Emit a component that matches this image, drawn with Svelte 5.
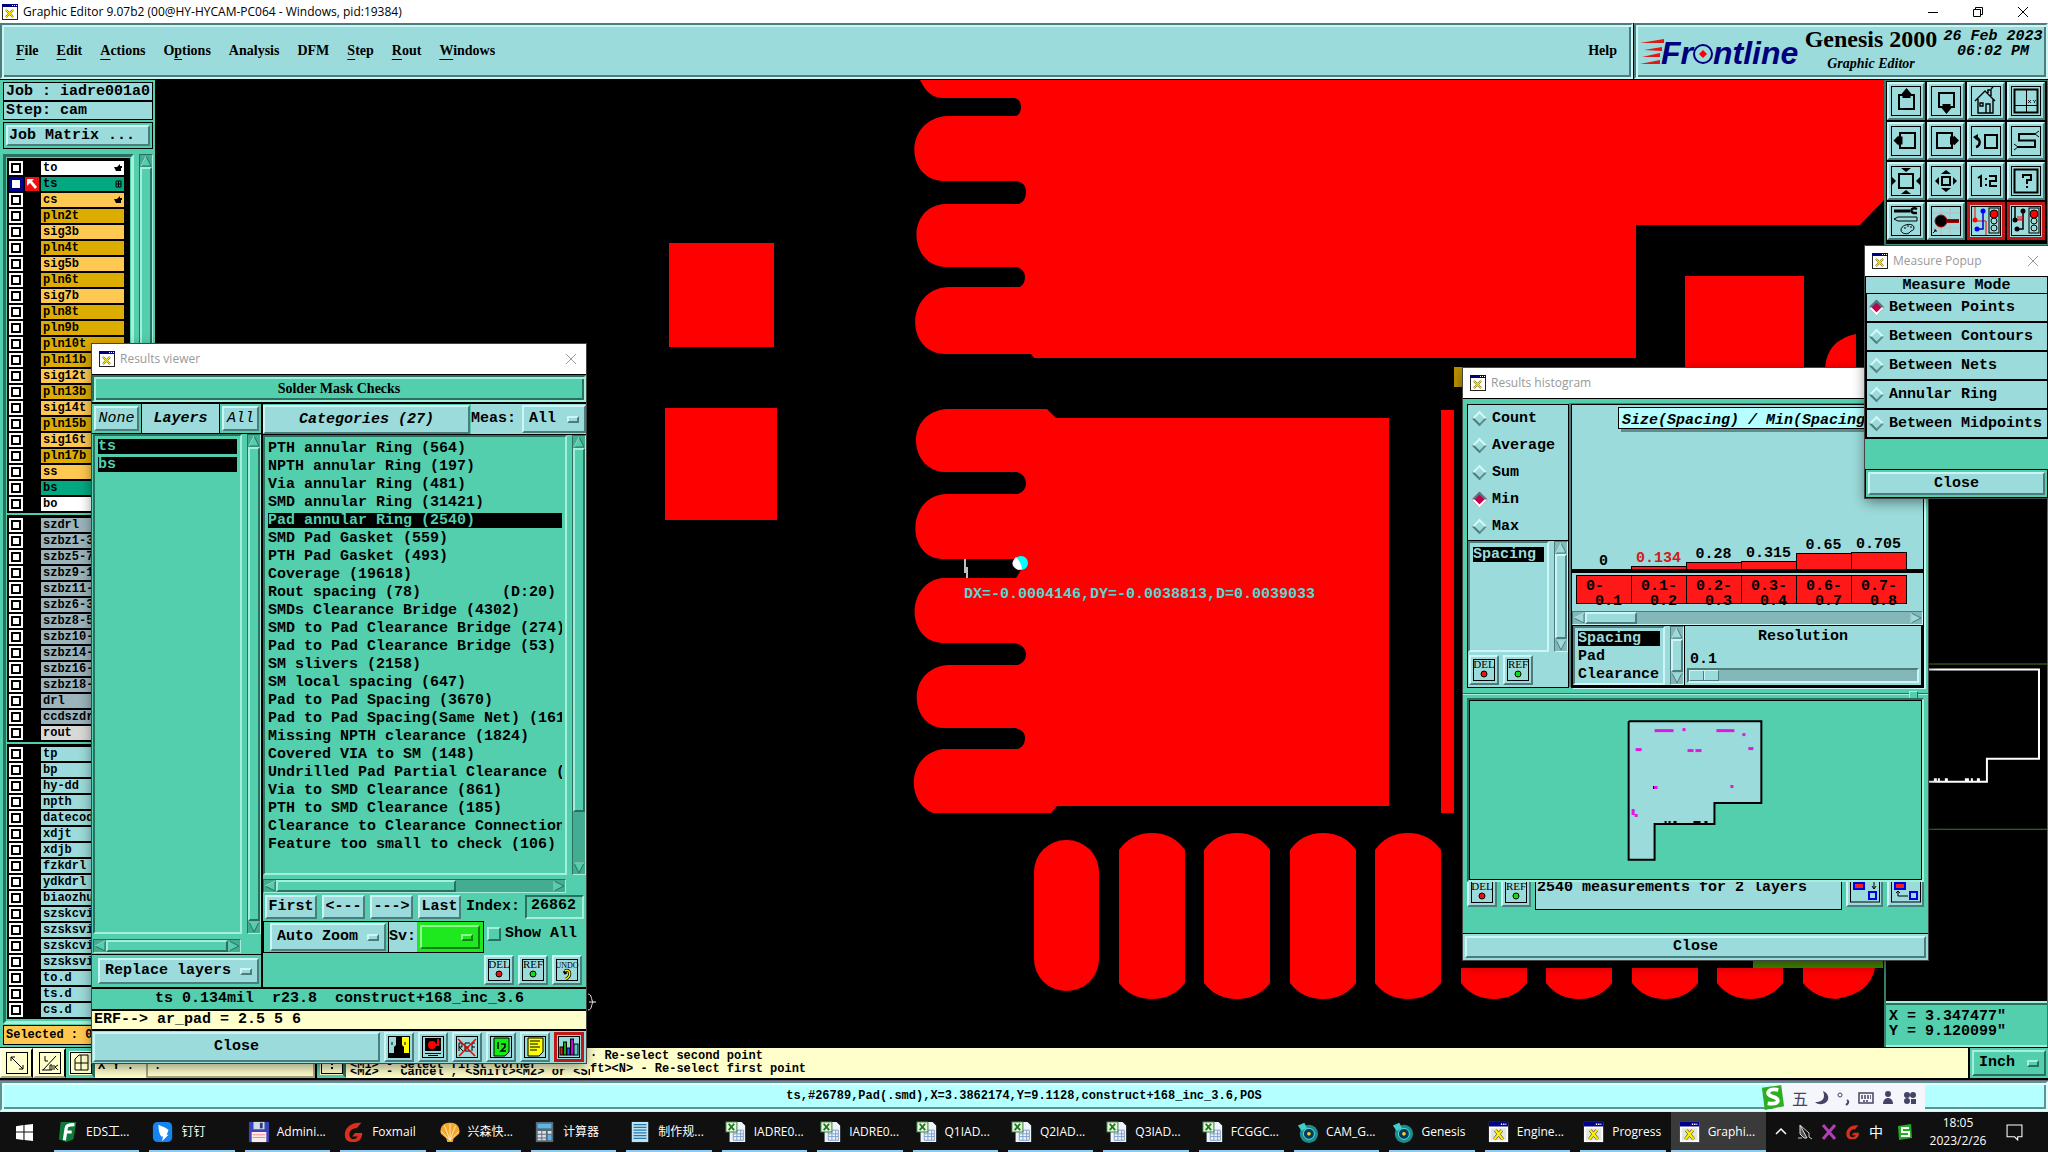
<script>
  const menus = [
    ['', 'F', 'ile'], ['', 'E', 'dit'], ['', 'A', 'ctions'], ['O', 'p', 'tions'], ['Analysis', '', ''],
    ['DFM', '', ''], ['', 'S', 'tep'], ['', 'R', 'out'], ['', 'W', 'indows']
  ];

  const mk = (kind, names) => names.map((n) => ({ n, kind }));
  const inner = 'pln2t sig3b pln4t sig5b pln6t sig7b pln8t pln9b pln10t pln11b sig12t pln13b sig14t pln15b sig16t pln17b'.split(' ');
  const groups = [
    [
      { n: 'to', kind: 'white', hand: true },
      { n: 'ts', kind: 'mask', on: true },
      { n: 'cs', kind: 'signal', hand: true },
      ...inner.map((n) => ({ n, kind: n.startsWith('p') ? 'plane' : 'signal' })),
      { n: 'ss', kind: 'signal' },
      { n: 'bs', kind: 'mask' },
      { n: 'bo', kind: 'white' }
    ],
    [
      ...mk('drill', 'szdrl szbz1-3 szbz5-7 szbz9-1 szbz11- szbz6-3 szbz8-5 szbz10- szbz14- szbz16- szbz18- drl ccdszdr'.split(' ')),
      { n: 'rout', kind: 'rout' }
    ],
    mk('misc', 'tp bp hy-dd npth datecod xdjt xdjb fzkdrl ydkdrl biaozhu szskcvi szsksvi szskcvi szsksvi to.d ts.d cs.d'.split(' '))
  ];

  const categories = [
    'PTH annular Ring (564)', 'NPTH annular Ring (197)', 'Via annular Ring (481)', 'SMD annular Ring (31421)',
    'Pad annular Ring (2540)', 'SMD Pad Gasket (559)', 'PTH Pad Gasket (493)', 'Coverage (19618)',
    'Rout spacing (78)         (D:20)', 'SMDs Clearance Bridge (4302)', 'SMD to Pad Clearance Bridge (274)',
    'Pad to Pad Clearance Bridge (53)', 'SM slivers (2158)', 'SM local spacing (647)', 'Pad to Pad Spacing (3670)',
    'Pad to Pad Spacing(Same Net) (161)', 'Missing NPTH clearance (1824)', 'Covered VIA to SM (148)',
    'Undrilled Pad Partial Clearance (12)', 'Via to SMD Clearance (861)', 'PTH to SMD Clearance (185)',
    'Clearance to Clearance Connection', 'Feature too small to check (106)'
  ];

  const bins = [
    { v: '0', h: 0, a: '0-', b: '0.1' },
    { v: '0.134', h: 3, a: '0.1-', b: '0.2', hot: true },
    { v: '0.28', h: 7, a: '0.2-', b: '0.3' },
    { v: '0.315', h: 8, a: '0.3-', b: '0.4' },
    { v: '0.65', h: 16, a: '0.6-', b: '0.7' },
    { v: '0.705', h: 17, a: '0.7-', b: '0.8' }
  ];

  const traffic = '<rect x="18" y="2" width="10" height="25" fill="none" stroke="#000"/><circle cx="23" cy="8" r="4" fill="#f00" stroke="#000"/><circle cx="23" cy="15" r="3" fill="none" stroke="#000"/><circle cx="23" cy="22" r="3" fill="none" stroke="#000"/>';
  const tools = [
    { t: 'Pan up', s: '<rect x="8" y="9" width="15" height="14" fill="none" stroke="#000" stroke-width="2"/><path d="M15.500 2l5 6h-1v4h-8V8h-1z"/>' },
    { t: 'Pan down', s: '<rect x="8" y="7" width="15" height="14" fill="none" stroke="#000" stroke-width="2"/><path d="M15.500 28l5-6h-1v-4h-8v4h-1z"/>' },
    { t: 'Home', s: '<path d="M4 15L14 5l10 10M7 13v14h15V13M17 7V4h3v6M20 3l2-2M9 17h3v3H9zM15 27v-9h4v9" fill="none" stroke="#000" stroke-width="1.400"/>' },
    { t: 'Window XY', s: '<rect x="3.500" y="3.500" width="23" height="23" fill="none" stroke="#000" stroke-width="2"/><path d="M15.500 4v22M4 19.500h22" stroke="#000" fill="none"/><path d="M17 14l3 3m0-3l-3 3M22 14l1.500 1.500L25 14m-1.500 1.500V17" stroke="#000" fill="none" stroke-width=".8"/>' },
    { t: 'Pan left', s: '<rect x="9" y="7" width="15" height="15" fill="none" stroke="#000" stroke-width="2"/><path d="M2.500 14.500l5-5v1h4v8h-4v1z"/>' },
    { t: 'Pan right', s: '<rect x="6" y="7" width="15" height="15" fill="none" stroke="#000" stroke-width="2"/><path d="M28 14.500l-5-5v1h-4v8h4v1z"/>' },
    { t: 'Previous', s: '<rect x="14" y="9" width="12" height="13" fill="none" stroke="#000" stroke-width="2"/><path d="M4 12c6-1 6 8 1 9" fill="none" stroke="#000" stroke-width="2.500"/><path d="M2 11l5-3v7z"/>' },
    { t: 'Serpentine', s: '<path d="M24 8H8v6.500h16V21H7" fill="none" stroke="#000" stroke-width="2"/><path d="M24 8l4-3M24 8l4 3M7 21l-4-3M7 21l-4 3" stroke="#000" fill="none"/>' },
    { t: 'Zoom in', s: '<rect x="8" y="8" width="14" height="14" fill="none" stroke="#000" stroke-width="2"/><path d="M15 6l-5-4h10zM15 24l-5 4h10zM5 15l-4-4v8zM25 15l4-4v8z"/>' },
    { t: 'Zoom out', s: '<rect x="11" y="11" width="8" height="8" fill="none" stroke="#000" stroke-width="2"/><path d="M15 4l-5 4h10zM15 26l-5-4h10zM4 15l4-4v8zM26 15l-4-4v8z"/>' },
    { t: 'Scale one to two', s: '<path d="M7 12l3-2v11M15 12v2m0 4v2M18 10h7v5h-6v5h7" fill="none" stroke="#000" stroke-width="2"/>' },
    { t: 'Query', s: '<rect x="3.500" y="3.500" width="23" height="23" fill="none" stroke="#000" stroke-width="2"/><path d="M12 12V9h8v5h-4v4m0 2v2" fill="none" stroke="#000" stroke-width="2"/>' },
    { t: 'Tools', s: '<path d="M3 5h16" stroke="#000" stroke-width="3"/><path d="M26 3c-6-3-9 5 0 4" fill="none" stroke="#000" stroke-width="2.500"/><path d="M3 13l4-2h19v4H7zM10 24c0-6 13-8 13-2 0 3-3 2-4 4-2 3-9 2-9-2z" fill="none" stroke="#000"/><path d="M13 22h2m1-2h2m1 1h2" stroke="#000"/>' },
    { t: 'Snap', s: '<path d="M10 1v28M19 1v28M1 7h28M1 22h28" stroke="#c9b0b0" stroke-width=".8"/><path d="M10 15h18" stroke="#a00" stroke-width="4"/><path d="M10 15h18" stroke="#300" stroke-width="1"/><circle cx="10" cy="15" r="6" stroke="#a00"/><path d="M2 27l3-3m-2 0h2v2" stroke="#000" fill="none"/>' },
    { t: 'Net compare', red: true, s: '<path d="M4 1v14h11v14" stroke="#f00" fill="none" stroke-width="1"/><path d="M12 5v18H7" stroke="#00c" fill="none" stroke-width="1.500"/><circle cx="12" cy="5" r="2.500" fill="#00f"/><circle cx="6" cy="23" r="2.500" fill="#00f"/><circle cx="4" cy="14" r="2.500" fill="#f00"/>' + traffic },
    { t: 'Net measure', red: true, s: '<path d="M4 1v12M12 5v18H7" stroke="#000" fill="none" stroke-width="1.500"/><path d="M6 14h6M7 10v4m2-4v4m2-4v4" stroke="#f00"/><circle cx="12" cy="5" r="2.500"/><circle cx="6" cy="23" r="2.500"/><circle cx="4" cy="14" r="2.500"/>' + traffic }
  ];

  const viewerTools = [
    { t: 'Contrast', s: '<rect x="0" y="0" width="10" height="20" fill="#9cdbdb"/><rect x="10" y="0" width="10" height="20" fill="#ff0"/><path d="M7 0h6v8l2 2v6h5v4H0v-4h5v-6l2-2z"/><path d="M3 5v3M16 5v3" stroke="#000"/>' },
    { t: 'Record', s: '<rect x="2" y="1" width="16" height="13"/><circle cx="9" cy="8" r="4" fill="#f00"/><path d="M9 8h6V2" stroke="#f00" stroke-width="2" fill="none"/><path d="M2 16.500h16M5 18.500h10" stroke="#000"/>' },
    { t: 'Clear references', s: '<path d="M2 14V6h3v4H2l4 4M13 6H8v8h5M8 10h4M18 6h-3v8M15 10h3" fill="none" stroke="#000"/><path d="M1 2l17 17M19 2L2 19" stroke="#e00" stroke-width="1.500"/>' },
    { t: 'Numbers', s: '<path d="M3 1h15v14l-4 4H3z" fill="#1e1" stroke="#000"/><path d="M7 5v7M10 7h4v3l-4 4h5" stroke="#000" fill="none" stroke-width="1.500"/>' },
    { t: 'Notes', s: '<path d="M3 1h15v14l-4 4H3z" fill="#ff0" stroke="#000"/><path d="M5 4h10M5 7h8M5 10h10M5 13h7" stroke="#000"/>' },
    { t: 'Histogram', red: true, s: '<rect x="1" y="10" width="3" height="8" fill="#d22" stroke="#000"/><rect x="4.500" y="5" width="3" height="13" fill="#1a1" stroke="#000"/><rect x="8" y="11" width="3" height="7" fill="#35f" stroke="#000"/><rect x="11.500" y="2" width="3" height="16" fill="#c0c" stroke="#000"/><rect x="15" y="7" width="4" height="11" fill="#5cc" stroke="#000"/>' }
  ];

  const modes = ['Between Points', 'Between Contours', 'Between Nets', 'Annular Ring', 'Between Midpoints'];
  const stats = ['Count', 'Average', 'Sum', 'Min', 'Max'];

  const eds = '<path d="M4 1h17l-3 19-8 3-8-3z" fill="#0d7a3c"/><path d="M8 21L10 8c0-3 2-4 9-4M9 12h7" stroke="#fff" stroke-width="3.500" fill="none"/>';
  const excel = '<path d="M5 1h13l4 4v18H5z" fill="#eef4fb"/><path d="M9 10h11v11H9zM9 14h11M9 17h11M13 10v11M17 10v11" fill="none" stroke="#7d9cc8"/><rect x="1" y="1" width="12" height="11" fill="#e6f3df" stroke="#2c7a2c"/><path d="M4 3l6 7M10 3l-6 7" stroke="#1c7a1c" stroke-width="2"/>';
  const gen = '<circle cx="13" cy="14" r="10" fill="#1c8d8d"/><circle cx="13" cy="14" r="6" fill="#063a5a" stroke="#5ee"/><circle cx="13" cy="14" r="2" fill="#fc3"/><path d="M1 5l7-3 3 6-6 3z" fill="#4cc"/>';
  const xwin = '<rect x="1" y="1" width="21" height="22" fill="#fff"/><rect x="1" y="1" width="21" height="5" fill="#008"/><path d="M14 3.500h6" stroke="#fff" stroke-width="1.500" stroke-dasharray="1.500 1"/><rect x="3" y="8" width="17" height="13" fill="#e4e4e0"/><path d="M8 10l8 10M15 10L7 20" stroke="#333" stroke-width="3.500"/><path d="M8 10l8 10M15 10L7 20" stroke="#fe0" stroke-width="2.500"/>';
  const tasks = [
    ['EDS工...', eds],
    ['钉钉', '<rect x="1" y="1" width="21" height="22" rx="5" fill="#1583f0"/><path d="M7 4c5 2 10 4 11 6l-2 5h2l-7 7 1-5h-2c-2-3-3-8-3-13z" fill="#fff"/>'],
    ['Admini...', '<rect x="1" y="1" width="22" height="22" fill="#3a44b8"/><rect x="6" y="1" width="12" height="8" fill="#cdd"/><rect x="13" y="2" width="3" height="6" fill="#338"/><rect x="4" y="12" width="16" height="11" fill="#fdeaea"/><path d="M5 15h14M5 18h14" stroke="#e88"/>'],
    ['Foxmail', '<path d="M20 2C8 1 2 8 2 15s5 8 9 8c7 0 10-4 10-10h-8l-3 4h6c-2 4-9 4-9-2 0-5 4-7 8-7z" fill="#d8301c"/>'],
    ['兴森快...', '<path d="M9 23l-1-4L2 14C0 5 7 1 12 2c6-1 12 4 10 12l-6 5-1 4z" fill="#f3a52c"/><path d="M12 21V3M12 21L6 5M12 21l6-16M12 21L2 11m10 10l10-10" stroke="#fff0c0"/>'],
    ['计算器', '<rect x="2" y="1" width="19" height="22" fill="#5b6b74"/><rect x="4" y="3" width="15" height="5" fill="#5ab5e8"/><path d="M4 11h4v3H4zm5 0h4v3H9zm6 0h4v3h-4zM4 15h4v3H4zm5 0h4v3H9zM4 19h4v2H4zm5 0h4v2H9z" fill="#dde"/><path d="M15 15h4v6h-4z" fill="#5ab5e8"/>'],
    ['制作规...', '<rect x="3" y="1" width="18" height="22" fill="#bfe4f5"/><path d="M5 4h14M5 7h14M5 10h14M5 13h14M5 16h14M5 19h14" stroke="#2778a8" stroke-width="1.500"/>'],
    ['IADRE0...', excel], ['IADRE0...', excel], ['Q1IAD...', excel], ['Q2IAD...', excel], ['Q3IAD...', excel], ['FCGGC...', excel],
    ['CAM_G...', gen], ['Genesis', gen], ['Engine...', xwin], ['Progress', xwin], ['Graphi...', xwin]
  ];
  const pads = [1119, 1204, 1290, 1375, 1461, 1546, 1632, 1717];
</script>

{#snippet winIcon()}
  <svg class="win-icon" viewBox="0 0 16 16" aria-hidden="true">
    <rect x=".5" y=".5" width="15" height="15" fill="#fff" stroke="#222" />
    <rect x="0" y="0" width="16" height="3" fill="#000080" />
    <path d="M10 1.500h1m1 0h1m1 0h1" stroke="#fff" />
    <path d="M4 6l7 7M11 6l-7 7" stroke="#333" stroke-width="2" /><path d="M4 6l7 7M11 6l-7 7" stroke="#fe0" stroke-width="1.400" />
  </svg>
{/snippet}

{#snippet cross()}
  <svg class="cross" viewBox="0 0 12 12" aria-hidden="true"><path d="M1 1l10 10M11 1L1 11" stroke="currentColor" fill="none" /></svg>
{/snippet}

{#snippet scroll(dir, thumb, tone)}
  <div class="scroll {dir} {tone}" aria-hidden="true">
    <svg class="tip" viewBox="0 0 12 12"><path d={dir === 'v' ? 'M6 1l5 10H1z' : 'M1 6l10-5v10z'} fill="var(--bg)" stroke="var(--lo)" /><path d={dir === 'v' ? 'M6 1L1 11' : 'M1 6l10-5'} stroke="var(--hi)" /></svg>
    <div class="track"><div class="thumb" style:flex-basis={thumb}></div></div>
    <svg class="tip" viewBox="0 0 12 12"><path d={dir === 'v' ? 'M6 11l5-10H1z' : 'M11 6L1 1v10z'} fill="var(--bg)" stroke="var(--lo)" /><path d={dir === 'v' ? 'M1 1h10' : 'M1 1v10'} stroke="var(--hi)" /></svg>
  </div>
{/snippet}

{#snippet mini(label, color)}
  <button class="icon-btn" aria-label={label}>
    <svg viewBox="0 0 22 22" aria-hidden="true"><rect x=".5" y=".5" width="21" height="21" fill="none" stroke="#000" />
      <text x="11" y="9" text-anchor="middle" class="mini-label" class:long={label.length > 3}>{label}</text>
      {#if color}
        <circle cx="11" cy="15" r="3" fill={color} stroke="#000" />
      {:else}
        <path d="M9 12c5-3 7 5 1 8m0-5l-2-3" stroke="#000" stroke-width="3" fill="none" /><path d="M9 12c5-3 7 5 1 8" stroke="#fe0" stroke-width="1.500" fill="none" />
      {/if}
    </svg>
  </button>
{/snippet}

<div class="desk">
  <header class="titlebar">
    {@render winIcon()}
    <span class="grow">Graphic Editor 9.07b2 (00@HY-HYCAM-PC064 - Windows, pid:19384)</span>
    <button class="cap" aria-label="Minimize"><svg viewBox="0 0 12 12"><path d="M1 6.500h10" stroke="#000" /></svg></button>
    <button class="cap" aria-label="Restore"><svg viewBox="0 0 12 12"><path d="M1.500 3.500h7v7h-7zM3.500 3V1.500h7v7H9" stroke="#000" fill="none" /></svg></button>
    <button class="cap" aria-label="Close window">{@render cross()}</button>
  </header>

  <div class="top">
    <nav class="groove menu">
      {#each menus as [a, u, b]}
        <button>{a}<u>{u}</u>{b}</button>
      {/each}
      <button class="help">Help</button>
    </nav>
    <div class="groove brand">
      <svg class="logo" viewBox="0 0 162 36" role="img" aria-label="Frontline">
        <path d="M0 10l24-4v4zM4 17l18-3v4zM2 24l18-4v4zM0 31l20-4v4z" fill="#e01818" />
        <text x="21" y="31" font-family="Liberation Sans, sans-serif" font-weight="bold" font-style="italic" font-size="32" fill="#00007c">Fr</text>
        <circle cx="63" cy="21" r="9" fill="none" stroke="#00007c" stroke-width="2" /><path d="M63 17l4 4-4 4-4-4z" fill="#f00" />
        <text x="73" y="31" font-family="Liberation Sans, sans-serif" font-weight="bold" font-style="italic" font-size="32" fill="#00007c">ntline</text>
      </svg>
      <div class="product"><strong>Genesis 2000</strong><em>Graphic Editor</em></div>
      <div class="date"><span>26 Feb 2023</span><span>06:02 PM</span></div>
    </div>
  </div>

  <div class="main">
    <aside class="left">
      <div class="info">Job : iadre001a0</div>
      <div class="info">Step: cam</div>
      <div class="matrix"><button class="btn">Job Matrix ...</button></div>
      <div class="layers">
        <div class="well">
          {#each groups as g}
            <div class="group">
              {#each g as l}
                <div class="layer">
                  <input type="checkbox" aria-label={l.n} checked={l.on} />
                  <span class="mark">
                    {#if l.on}<svg viewBox="0 0 14 14" aria-hidden="true"><rect width="14" height="14" fill="#f01010" /><path d="M2 2h7L7 4l5 6-2 2-5-6-3 3z" fill="#fff" /></svg>{/if}
                  </span>
                  <span class="name {l.kind}">{l.n}
                    {#if l.hand}<svg viewBox="0 0 8 8" aria-hidden="true"><path d="M0 3h3l3-3v2h2v2H7v3H2z" /></svg>{/if}
                    {#if l.on}<svg viewBox="0 0 8 8" aria-hidden="true"><path d="M2 1h5v6H2zM4.500 1v6M2 4h5" stroke="#000" fill="none" /></svg>{/if}
                  </span>
                </div>
              {/each}
            </div>
          {/each}
        </div>
        {@render scroll('v', '92%', 'green')}
      </div>
      <div class="selected">Selected : 0</div>
    </aside>

    <svg class="canvas" viewBox="155 80 1729 967" preserveAspectRatio="xMinYMin slice" role="img" aria-label="Board artwork">
      <g fill="#f00">
        <rect x="669" y="243" width="105" height="104" /><rect x="665" y="408" width="112" height="112" />
        <path d="M920 80C926 92 932 98 944 98H1015Q1021 100 1021 107T1016 116H948C904 118 904 179 943 181H1017Q1026 183 1026 192T1019 204H945C906 206 908 265 945 267H1017Q1025 270 1025 277T1020 287H948C906 289 904 352 944 354H1031L1034 358H1636V225H1860L1884 200V80Z" />
        <path d="M948 409H1047L1056 418H1389V806H1057L1051 813H933C905 802 907 754 943 749H1018Q1025 746 1025 738T1015 728H943C908 726 906 667 949 665H1018Q1026 662 1026 654T1015 643H943C904 642 906 580 944 578H1016L1021 570V563L1016 559H941C906 557 906 496 946 494H1018Q1026 491 1026 483T1017 472H944C908 470 904 411 948 409Z" />
        <rect x="1441" y="410" width="13" height="403" /><rect x="1685" y="276" width="119" height="95" />
        <path d="M1825 368q2-28 31-34v34z" />
        <rect x="1034" y="840" width="65" height="151" rx="32" />
        {#each pads as x}
          <path d="M{x} 850Q{x + 12} 833 {x + 33} 833T{x + 66} 850V983Q{x + 54} 999 {x + 33} 999T{x} 983Z" />
        {/each}
        <path d="M1803 968H1875Q1870 994 1836 999Q1815 998 1803 983Z" />
      </g>
      <rect x="1454" y="820" width="427" height="148" />
      <rect x="1753" y="940" width="130" height="28" fill="#480" />
      <rect x="1454" y="367" width="12" height="20" fill="#b89000" />
      <path d="M965 559v14m2-6v11" stroke="#fff" stroke-width="1.500" />
      <circle cx="1021" cy="563" r="7" fill="#0ff" /><path d="M1016 557q-8 8 2 13l4-1q-1-7-6-12z" fill="#fff" />
      <text x="964" y="598" class="measure">DX=-0.0004146,DY=-0.0038813,D=0.0039033</text>
      <path d="M588 994c4 0 3 6 5 8-2 3-1 8-5 8m1-8h7" stroke="#fff" fill="none" />
    </svg>

    <aside class="right">
      <div class="tools">
        {#each tools as t}
          <button class="tool" class:red={t.red} aria-label={t.t}>
            <svg viewBox="0 0 30 30" aria-hidden="true"><rect x=".5" y=".5" width="29" height="29" fill="none" stroke="#000" />{@html t.s}</svg>
          </button>
        {/each}
      </div>
      <svg class="overview" viewBox="1886 247 161 753" preserveAspectRatio="xMaxYMin slice" aria-hidden="true">
        <path d="M1886 663.500h161M1886 828.500h161" stroke="#4a7a20" />
        <path d="M1886 669h153v89h-52v23h-101" stroke="#fff" stroke-width="2" fill="none" />
        <path d="M1934 779h3m1 0h2m5 0h3m17 0h4m2 0h2m4 0h3" stroke="#fff" stroke-width="3" />
      </svg>
      <div class="coords"><span>X = 3.347477"</span><span>Y = 9.120099"</span></div>
    </aside>
  </div>

  <div class="prompt">
    <button class="pbtn" aria-label="Select line"><svg viewBox="0 0 22 22"><rect x=".5" y=".5" width="21" height="21" fill="none" stroke="#000" /><path d="M5 5l12 12M5 9V5h4M17 13v4h-4" stroke="#000" fill="none" /></svg></button>
    <button class="pbtn" aria-label="Select mode"><svg viewBox="0 0 22 22"><rect x=".5" y=".5" width="21" height="21" fill="none" stroke="#000" /><path d="M4 18L17 4M6 4v5h3M13 13h-2v5h2zM15 13v5m4-5l-3 2 3 3M3 18h8" stroke="#000" fill="none" /></svg></button>
    <button class="pbtn green-edge" aria-label="Grid"><svg viewBox="0 0 22 22"><rect x=".5" y=".5" width="21" height="21" fill="none" stroke="#000" /><path d="M5 7l4-4h9v15H5zM5 11h13M11 3v15" stroke="#000" fill="none" /></svg></button>
    <label class="xy"><span>X Y :</span><input type="text" value=":" /></label>
    <button class="pbtn green-edge" aria-label="Alert"><svg viewBox="0 0 22 22"><rect x=".5" y=".5" width="21" height="21" fill="none" stroke="#000" /><path d="M11 5v8m0 2v2" stroke="#000" stroke-width="2" /></svg></button>
    <div class="hint">
      <div class="hint-old"><span>&lt;M1&gt; - Select first corner</span><span class="cut">&lt;M2&gt; - Cancel , &lt;Shift&gt;&lt;M2&gt; or &lt;Shi</span></div>
      <div class="hint-new"><span>· Re-select second point</span><span>ft&gt;&lt;N&gt; - Re-select first point</span></div>
    </div>
    <div class="unit green"><span class="opt"><select aria-label="Units"><option>Inch</option></select><i></i></span></div>
  </div>

  <div class="status"><div class="groove">ts,#26789,Pad(.smd),X=3.3862174,Y=9.1128,construct+168_inc_3.6,POS</div></div>

  <footer class="taskbar">
    <button class="start" aria-label="Start"><svg viewBox="0 0 16 16"><path d="M0 2l7-1v6H0zM8 1l8-1v7H8zM0 8h7v7l-7-1zM8 8h8v8l-8-1z" fill="#fff" /></svg></button>
    <div class="tasks">
      {#each tasks as [name, icon], i}
        <button class="task" class:active={i === 17}><svg viewBox="0 0 24 24" aria-hidden="true">{@html icon}</svg><span>{name}</span></button>
      {/each}
    </div>
    <div class="tray">
      <svg viewBox="0 0 16 16"><path d="M3 10l5-5 5 5" stroke="#fff" fill="none" stroke-width="1.500" /></svg>
      <svg viewBox="0 0 16 16"><path d="M3 1v9l4 4h3z" fill="#555" stroke="#ddd" /><path d="M3 1l9 8v4l3 2M1 14h4" stroke="#ccc" fill="none" /></svg>
      <svg viewBox="0 0 16 16"><path d="M2 1l12 14M14 1L2 15" stroke="#b33fb5" stroke-width="3" /></svg>
      <svg viewBox="0 0 24 24">{@html tasks[3][1]}</svg>
      <span>中</span>
      <svg viewBox="0 0 16 16"><path d="M1 2l13-2 1 14-13 2z" fill="#28a828" /><path d="M12 4H5v4h7v4H4" stroke="#fff" stroke-width="2" fill="none" /></svg>
    </div>
    <div class="clock"><span>18:05</span><span>2023/2/26</span></div>
    <svg class="note" viewBox="0 0 16 16"><path d="M1 1h14v11h-4v3l-3-3H1z" stroke="#fff" fill="none" /></svg>
  </footer>

  <section class="window viewer green">
    <div class="wtitle">{@render winIcon()}<span class="grow">Results viewer</span><button class="cap" aria-label="Close results viewer">{@render cross()}</button></div>
    <div class="heading"><div class="groove">Solder Mask Checks</div></div>
    <div class="panes">
      <div class="pane-l">
        <div class="lhead"><button class="btn thin">None</button><strong>Layers</strong><button class="btn thin">All</button></div>
        <div class="listrow">
          <ul class="list"><li class="sel">ts</li><li class="sel">bs</li></ul>
          {@render scroll('v', '100%', 'green')}
        </div>
        <div class="hrow">{@render scroll('h', '100%', 'green')}</div>
        <div class="replace"><span class="opt blue"><select aria-label="Layer mode"><option>Replace layers</option></select><i></i></span></div>
      </div>
      <div class="pane-r">
        <div class="rhead"><button class="btn cat">Categories (27)</button><label>Meas: <span class="opt blue"><select><option>All</option></select><i></i></span></label></div>
        <div class="listrow">
          <ul class="list">
            {#each categories as c, i}<li class:sel={i === 4}>{c}</li>{/each}
          </ul>
          {@render scroll('v', '88%', 'green')}
        </div>
        <div class="hrow">{@render scroll('h', '65%', 'green')}</div>
        <div class="steps">
          <button class="btn">First</button><button class="btn">&lt;---</button><button class="btn">---&gt;</button><button class="btn">Last</button>
          <label>Index: <input type="text" value="26862" /></label>
        </div>
        <div class="zoomrow">
          <div class="zbox"><span class="opt blue"><select aria-label="Zoom mode"><option>Auto Zoom</option></select><i></i></span><label class="sv">Sv:<span class="opt lime"><select><option></option></select><i></i></span></label></div>
          <label class="show"><input type="checkbox" />Show All</label>
        </div>
        <div class="minis">{@render mini('DEL', '#e11')}{@render mini('REF', '#1d1')}{@render mini('UNDO', '')}</div>
      </div>
    </div>
    <div class="info-line">ts 0.134mil&nbsp; r23.8&nbsp; construct+168_inc_3.6</div>
    <div class="erf">ERF--&gt; ar_pad = 2.5 5 6</div>
    <div class="closerow">
      <button class="btn grow">Close</button>
      {#each viewerTools as v}
        <button class="icon-btn" class:red={v.red} aria-label={v.t}><svg viewBox="-1 -1 22 22" aria-hidden="true"><rect x="-.5" y="-.5" width="21" height="21" fill="none" stroke="#000" />{@html v.s}</svg></button>
      {/each}
    </div>
  </section>

  <section class="window histo green">
    <div class="wtitle">{@render winIcon()}<span class="grow">Results histogram</span></div>
    <div class="hbody">
      <div class="hleft">
        <div class="stats">
          {#each stats as s}<label><input type="radio" name="stat" checked={s === 'Min'} />{s}</label>{/each}
        </div>
        <div class="hlist">
          <div class="listrow"><ul class="list"><li class="sel">Spacing</li></ul>{@render scroll('v', '100%', 'blue')}</div>
          <div class="minis">{@render mini('DEL', '#e11')}{@render mini('REF', '#1d1')}</div>
        </div>
      </div>
      <div class="hright">
        <div class="chart">
          <div class="ctitle">Size(Spacing) / Min(Spacing)</div>
          <div class="bars">
            {#each bins as b}
              <div class="bin"><span class:hot={b.hot}>{b.v}</span><div class="bar" class:none={!b.h} style:height="{b.h}px"></div></div>
            {/each}
          </div>
          <div class="cells">
            {#each bins as b}<div class="cell"><span>{b.a}</span><span class="to">{b.b}</span></div>{/each}
          </div>
        </div>
        {@render scroll('h', '16%', 'blue')}
        <div class="hbottom">
          <div class="listrow"><ul class="list"><li class="sel">Spacing</li><li>Pad</li><li>Clearance</li></ul>{@render scroll('v', '100%', 'blue')}</div>
          <label class="res"><span>Resolution</span><output>0.1</output><input type="range" min="0" max="100" value="0" /></label>
        </div>
      </div>
    </div>
    <div class="sash"><i></i></div>
    <div class="map">
      <svg viewBox="1468 700 454 180" role="img" aria-label="Board map">
        <path d="M1629 721h132v82h-47v21h-60v36h-26v-138z" fill="#9cdbdb" stroke="#000" stroke-width="2" />
        <g fill="#e018e0"><rect x="1654" y="729" width="19" height="3" /><rect x="1682" y="728" width="3" height="3" /><rect x="1716" y="729" width="18" height="3" /><rect x="1742" y="733" width="3" height="3" /><rect x="1635" y="748" width="6" height="3" /><rect x="1687" y="749" width="6" height="3" /><rect x="1695" y="749" width="6" height="3" /><rect x="1748" y="747" width="5" height="3" /><rect x="1653" y="786" width="4" height="3" /><rect x="1730" y="785" width="3" height="3" /><path d="M1631 809h3v5h3v3h-3v-2h-3z" /></g>
        <path d="M1664 822h2m2 0h2m3 0h3m17 0h7m4 0h3" stroke="#000" stroke-width="2" /><path d="M1653 786v3" stroke="#000" />
      </svg>
    </div>
    <div class="mrow">
      {@render mini('DEL', '#e11')}{@render mini('REF', '#1d1')}
      <span class="grow count">2540 measurements for 2 layers</span>
      <button class="icon-btn wide" aria-label="Move down"><svg viewBox="0 0 30 22"><rect x=".5" y="-8" width="29" height="29" fill="none" stroke="#000" /><path d="M4 2h10v6H4z" fill="#e22" stroke="#00d" stroke-width="2" /><path d="M19 11h7v7h-7z" fill="none" stroke="#00d" stroke-width="2" /><path d="M24 1v7m-2-3l2 3 2-3" stroke="#000" fill="none" /></svg></button>
      <button class="icon-btn wide" aria-label="Move up"><svg viewBox="0 0 30 22"><rect x=".5" y="-8" width="29" height="29" fill="none" stroke="#000" /><path d="M4 2h10v6H4z" fill="#e22" stroke="#00d" stroke-width="2" /><path d="M19 11h7v7h-7z" fill="none" stroke="#00d" stroke-width="2" /><path d="M17 15H7v-4m-2 1l2-2 2 2" stroke="#000" fill="none" /></svg></button>
    </div>
    <div class="hclose"><button class="btn">Close</button></div>
  </section>

  <section class="window popup green">
    <div class="wtitle">{@render winIcon()}<span class="grow">Measure Popup</span><button class="cap" aria-label="Close measure popup">{@render cross()}</button></div>
    <div class="mode">Measure Mode</div>
    {#each modes as m, i}<label class="choice"><input type="radio" name="mode" checked={i === 0} />{m}</label>{/each}
    <div class="pclose"><button class="btn">Close</button></div>
  </section>

  <div class="ime">
    <svg viewBox="0 0 28 28" aria-hidden="true"><path d="M3 4l20-3 3 22-20 4z" fill="#2cae22" /><path d="M20 6c-11-2-14 5-6 7s8 9-5 7" stroke="#fff" stroke-width="4" fill="none" /></svg>
    <span>五</span>
    <svg class="sm" viewBox="0 0 16 16"><path d="M9 1c3 8-1 11-8 11 5 5 15 1 13-6-1-3-3-4-5-5z" fill="#446" /></svg>
    <svg class="sm" viewBox="0 0 16 16"><circle cx="4" cy="5" r="2" fill="none" stroke="#446" /><path d="M11 10q3 2-1 5" stroke="#446" stroke-width="2" fill="none" /></svg>
    <svg class="sm" viewBox="0 0 16 16"><path d="M1 3h14v10H1z" stroke="#446" stroke-width="1.500" fill="none" /><path d="M3 6h10M3 8h10M5 11h6" stroke="#446" stroke-width="1.400" fill="none" stroke-dasharray="2 1" /></svg>
    <svg class="sm" viewBox="0 0 16 16"><circle cx="8" cy="4" r="3" fill="#446" /><path d="M3 14c0-8 10-8 10 0z" fill="#446" /></svg>
    <svg class="sm" viewBox="0 0 16 16" fill="#446"><circle cx="5" cy="5" r="3" /><circle cx="11" cy="5" r="3" /><circle cx="5" cy="11" r="3" /><rect x="9" y="9" width="5" height="5" /></svg>
  </div>
</div>

<style>
  :global(body) { background: #000; }
  :global(*) { box-sizing: border-box; }
  .desk {
    --bg: #9cdbdb; --hi: #ccf6f6; --lo: #4c7c7c;
    position: relative; display: grid; grid-template-rows: 23px 57px 1fr 33px 32px 40px;
    min-height: 100vh; overflow: hidden; color: #000; background: #000;
    font: bold 15px/18px 'Liberation Mono', monospace;
  }
  .green { --bg: #54cfae; --hi: #a4eedb; --lo: #2a7060; }
  .blue { --bg: #9cdbdb; --hi: #ccf6f6; --lo: #4c7c7c; }
  button, input, select { font: inherit; color: inherit; margin: 0; padding: 0; border: 0; border-radius: 0; background: none; }
  svg { display: block; flex: none; }
  .grow { flex: 1; }
  .groove { background: var(--bg); border: 2px solid; border-color: var(--lo) var(--hi) var(--hi) var(--lo); box-shadow: inset 2px 2px var(--hi), inset -2px -2px var(--lo); }

  .titlebar, .wtitle { display: flex; align-items: center; background: #fff; font: 12px/16px 'Open Sans', sans-serif; }
  .titlebar { padding: 0 5px 0 2px; gap: 5px; }
  .win-icon { width: 16px; height: 16px; }
  .cap { width: 40px; height: 22px; display: grid; place-items: center; }
  .cap svg, .cross { width: 12px; height: 12px; }
  .wtitle { height: 30px; padding-left: 7px; gap: 5px; color: #999; flex: none; }
  .wtitle .cap { width: 31px; }

  .top { display: flex; gap: 1px; padding-bottom: 1px; }
  .menu { flex: 1; display: flex; align-items: center; padding: 0 14px; gap: 18px; font: bold 14px/20px 'Liberation Serif', serif; }
  .menu u { text-underline-offset: 4px; text-decoration-thickness: 1px; }
  .help { margin-left: auto; }
  .brand { width: 414px; display: flex; align-items: center; padding-left: 4px; }
  .logo { width: 162px; height: 36px; overflow: visible; }
  .product { width: 138px; display: flex; flex-direction: column; align-items: center; font-family: 'Liberation Serif', serif; white-space: nowrap; }
  .product strong { font-size: 24px; line-height: 26px; }
  .product em { font-size: 14px; line-height: 24px; }
  .date { flex: 1; display: flex; flex-direction: column; align-items: center; align-self: start; padding-top: 4px; font-style: italic; line-height: 15px; white-space: nowrap; }

  .main { display: grid; grid-template-columns: 155px 1fr 164px; min-height: 0; }
  .left { background: #54cfae; display: flex; flex-direction: column; padding: 2px 2px 2px 3px; --bg: #54cfae; --hi: #a4eedb; --lo: #2a7060; }
  .info { height: 19px; border: 1px solid #000; background: #9cdbdb; padding-left: 2px; line-height: 18px; white-space: nowrap; overflow: hidden; }
  .matrix { border: 1px solid #000; margin: 2px 0 5px; padding: 2px; --bg: #9cdbdb; --hi: #ccf6f6; --lo: #4c7c7c; }
  .btn { background: var(--bg); border: 2px solid; border-color: var(--hi) var(--lo) var(--lo) var(--hi); text-align: center; white-space: nowrap; }
  .matrix .btn { width: 100%; height: 21px; line-height: 17px; text-align: left; padding-left: 1px; }
  .layers { flex: 1; display: flex; justify-content: space-between; min-height: 0; }
  .well { border: 3px solid; border-color: #2a7060 #a4eedb #a4eedb #2a7060; display: flex; flex-direction: column; gap: 2px; padding: 1px; width: 131px; font-size: 12px; line-height: 14px; }
  .group { background: #000; padding: 3px 6px 2px 2px; display: flex; flex-direction: column; gap: 2px; }
  .layer { display: flex; height: 14px; }
  .layer input { appearance: none; width: 14px; height: 14px; border: 2px solid #fff; background: #fff; box-shadow: inset 0 0 0 2px #000; }
  .layer input:checked { border-color: #0000a0; box-shadow: inset 0 0 0 1px #000060; }
  .mark { width: 18px; padding-left: 2px; }
  .mark svg { width: 14px; height: 14px; }
  .name { flex: 1; display: flex; justify-content: space-between; align-items: center; padding: 0 2px; overflow: hidden; white-space: nowrap; }
  .name svg { width: 8px; height: 8px; }
  .white { background: #fff; } .mask { background: #04a880; } .signal { background: #ffc850; } .plane { background: #dcac00; }
  .drill { background: #9cb4bc; } .rout { background: #d8d8d8; } .misc { background: #9cdbdb; }
  .selected { height: 20px; border: 1px solid #000; background: #ffc850; font-size: 12px; line-height: 18px; padding-left: 2px; margin-top: 1px; white-space: nowrap; }

  .canvas { width: 100%; height: 0; min-height: 100%; background: #000; }
  .measure { fill: #55d8d4; font: bold 15px 'Liberation Mono', monospace; }
  .mini-label { font: 11px 'Liberation Serif', serif; }
  .mini-label.long { font-size: 8px; }

  .right { display: flex; flex-direction: column; border: solid #3a7c6a; border-width: 1px 1px 0 2px; }
  .tools { display: grid; grid-template-columns: repeat(4, 38px); gap: 2px; padding: 1px 1px 4px; border-bottom: 3px solid #4c9c84; }
  .tool { height: 38px; background: var(--bg); border: 2px solid; border-color: var(--hi) var(--lo) var(--lo) var(--hi); padding: 2px; }
  .tool svg { width: 30px; height: 30px; }
  .tool.red, .icon-btn.red { border: 3px solid #c01818; }
  .tool.red { padding: 1px; }
  .overview { flex: 1 1 0; width: 100%; min-height: 0; }
  .coords { height: 46px; background: #54cfae; border: 2px solid #a4eedb; border-left: 0; border-right: 0; padding: 6px 0 0 3px; display: flex; flex-direction: column; line-height: 15px; box-shadow: inset 0 2px #2a7060; }

  .prompt { display: flex; background: #ffffcc; border-top: 1px solid #000; border-bottom: 2px solid #000; font-size: 12px; }
  .pbtn { width: 33px; display: grid; place-items: center; border: 2px solid; border-color: #fffff0 #a8a880 #a8a880 #fffff0; border-right: 2px solid #000; }
  .pbtn svg { width: 22px; height: 22px; }
  .pbtn.green-edge { width: 29px; border: 3px solid #54cfae; border-right-color: #2a7060; }
  .xy { width: 222px; display: flex; align-items: center; gap: 12px; padding-left: 3px; border-right: 2px solid #000; white-space: nowrap; }
  .xy span { padding-top: 6px; }
  .xy input { flex: 1; width: 1px; height: 30px; padding: 6px 0 0 6px; border: 2px solid; border-color: #a8a880; }
  .hint { flex: 1; display: flex; padding-left: 4px; line-height: 13px; white-space: pre; }
  .hint-old { width: 240px; padding-top: 13px; overflow: hidden; }
  .hint-old span { display: block; line-height: 8px; }
  .hint-old .cut { line-height: 6px; height: 8px; overflow: hidden; }
  .hint-new { display: flex; flex-direction: column; padding-top: 2px; }
  .unit { width: 80px; background: var(--bg); border-left: 2px solid #000; padding: 2px; display: flex; font-size: 15px; }
  .opt { display: inline-flex; align-items: center; background: var(--bg); border: 2px solid; border-color: var(--hi) var(--lo) var(--lo) var(--hi); padding: 0 5px; flex: 1; }
  .opt select { appearance: none; flex: 1; width: 1px; height: 100%; white-space: nowrap; }
  .opt i { width: 12px; height: 7px; border: 2px solid; border-color: var(--hi) var(--lo) var(--lo) var(--hi); }

  .status { background: #b4ffff; border-top: 1px solid #667; padding-bottom: 1px; display: grid; --bg: #b4ffff; --hi: #e0ffff; --lo: #5c9494; }
  .status .groove { display: grid; place-items: center; font-size: 12px; line-height: 16px; }

  .taskbar { background: #101010; color: #fff; display: flex; font: 12px/16px 'Open Sans', 'Noto Sans CJK SC', sans-serif; }
  .start { width: 49px; display: grid; place-items: center; }
  .start svg { width: 17px; height: 17px; }
  .tasks { flex: 1; display: flex; }
  .task { flex: 1 1 0; min-width: 0; display: flex; align-items: center; gap: 7px; padding-left: 8px; white-space: nowrap; overflow: hidden; position: relative; }
  .task::after { content: ''; position: absolute; left: 5px; right: 5px; bottom: 0; height: 2px; background: #8ccaf2; }
  .task.active { background: #3a3a3a; }
  .task.active::after { left: 0; right: 0; }
  .task svg { width: 22px; height: 22px; }
  .tray { width: 154px; padding-left: 7px; display: flex; align-items: center; gap: 8px; }
  .tray svg { width: 16px; height: 16px; }
  .tray span { width: 16px; font-size: 14px; }
  .tray span + svg { margin-left: 4px; }
  .clock { width: 76px; display: flex; flex-direction: column; justify-content: center; align-items: center; line-height: 18px; }
  .note { width: 17px; height: 17px; margin: 12px 25px 0 10px; }

  .scroll { display: flex; background: #44ac90; border: 1px solid; border-color: var(--lo) var(--hi) var(--hi) var(--lo); flex: none; }
  .scroll.blue { background: #84b8b8; }
  .scroll.v { flex-direction: column; width: 14px; }
  .scroll.h { height: 14px; }
  .tip { width: 12px; height: 12px; fill: none; }
  .track { flex: 1; display: flex; min-width: 0; min-height: 0; }
  .v .track { flex-direction: column; }
  .thumb { background: var(--bg); border: 2px solid; border-color: var(--hi) var(--lo) var(--lo) var(--hi); }

  .window { position: absolute; display: flex; flex-direction: column; background: var(--bg); box-shadow: 0 0 0 1px #444, 0 4px 12px rgba(0, 0, 0, .45); }
  .list { list-style: none; margin: 0; padding: 3px; flex: 1; min-width: 0; overflow: hidden; border: 2px solid; border-color: var(--lo) var(--hi) var(--hi) var(--lo); line-height: 18px; white-space: pre; }
  .list li { height: 18px; overflow: hidden; }
  .list .sel { background: linear-gradient(#000, #000) 0 1px / 100% 15px no-repeat; color: var(--bg); }
  .listrow { display: flex; gap: 5px; flex: 1; min-height: 0; }
  .icon-btn { width: 30px; height: 30px; padding: 2px; background: #9cdbdb; border: 2px solid; border-color: #ccf6f6 #4c7c7c #4c7c7c #ccf6f6; display: grid; place-items: center; flex: none; }
  .icon-btn svg { width: 22px; height: 22px; overflow: visible; }
  .icon-btn.red { padding: 1px; }
  .minis { display: flex; gap: 4px; }

  .viewer { left: 92px; top: 344px; width: 494px; height: 719px; }
  .heading { border: solid #000; border-width: 1px 0 2px; height: 30px; display: grid; flex: none; }
  .heading .groove { display: grid; place-items: center; font: bold 14px/18px 'Liberation Serif', serif; }
  .panes { flex: 1; display: grid; grid-template-columns: 171px 1fr; min-height: 0; border-bottom: 2px solid #000; }
  .pane-l { display: flex; flex-direction: column; border-right: 2px solid #000; min-height: 0; }
  .lhead { height: 30px; display: flex; font-style: italic; border-bottom: 1px solid #000; --bg: #9cdbdb; --hi: #ccf6f6; --lo: #4c7c7c; }
  .lhead .btn { margin: 2px; width: 45px; font-weight: normal; font-style: italic; }
  .lhead .btn:last-child { width: 37px; }
  .lhead strong { flex: 1; background: #9cdbdb; border: solid #000; border-width: 0 1px; text-align: center; line-height: 30px; }
  .pane-l .listrow { padding-left: 1px; }
  .pane-l .list { padding-top: 2px; }
  .hrow { padding: 5px 20px 1px 1px; }
  .replace { height: 33px; border-top: 1px solid #000; display: flex; padding: 3px 2px 3px 6px; }
  .pane-r { display: flex; flex-direction: column; min-height: 0; min-width: 0; }
  .rhead { height: 31px; display: flex; border-bottom: 1px solid #000; --bg: #9cdbdb; --hi: #ccf6f6; --lo: #4c7c7c; }
  .cat { width: 207px; font-style: italic; margin: 1px 1px 0 0; }
  .rhead label { flex: 1; background: #9cdbdb; display: flex; align-items: center; gap: 6px; }
  .rhead .opt { height: 28px; }
  .pane-r .listrow { min-width: 0; }
  .pane-r .hrow { padding: 4px 20px 2px 0; }
  .steps { display: flex; gap: 5px; height: 24px; padding: 0 2px; --bg: #9cdbdb; --hi: #ccf6f6; --lo: #4c7c7c; }
  .steps .btn { flex: 1 0 auto; }
  .steps label { display: flex; align-items: center; gap: 5px; --hi: #a4eedb; --lo: #2a7060; }
  .steps input { width: 59px; height: 24px; border: 2px solid; border-color: var(--lo) var(--hi) var(--hi) var(--lo); padding: 0 0 3px 4px; }
  .zoomrow { display: flex; gap: 3px; height: 34px; padding-top: 2px; }
  .zbox { width: 221px; border: 1px solid #000; display: flex; }
  .zbox > .opt { margin: 1px 2px 1px 6px; flex: 0 0 116px; }
  .sv { flex: 1; background: #9cdbdb; border-left: 1px solid #000; display: flex; align-items: center; }
  .lime { --bg: #1ee81e; --hi: #90f890; --lo: #108010; height: 24px; flex: 0 0 60px; margin-left: auto; margin-right: 3px; outline: 3px solid #1ee81e; }
  .show { display: flex; align-items: center; gap: 4px; padding-bottom: 6px; }
  .show input { appearance: none; width: 14px; height: 14px; border: 2px solid; border-color: var(--hi) var(--lo) var(--lo) var(--hi); }
  .pane-r > .minis { justify-content: flex-end; padding: 2px 4px 2px; }
  .info-line { height: 20px; padding-left: 63px; line-height: 20px; white-space: pre; flex: none; }
  .erf { height: 22px; background: #ffffcc; border: solid #000; border-width: 2px 0; padding-left: 2px; line-height: 18px; flex: none; }
  .closerow { background: #9cdbdb; display: flex; gap: 4px; padding: 1px 2px 1px 1px; --bg: #9cdbdb; --hi: #ccf6f6; --lo: #4c7c7c; }

  .histo { left: 1463px; top: 368px; width: 465px; height: 592px; }
  .hbody { --bg: #9cdbdb; --hi: #ccf6f6; --lo: #4c7c7c; display: grid; grid-template-columns: 102px 1fr; gap: 2px; padding: 5px 4px; height: 295px; border-top: 1px solid #000; flex: none; }
  .hleft { display: flex; flex-direction: column; border: 1px solid #000; background: #9cdbdb; min-height: 0; }
  .stats { height: 136px; border-bottom: 1px solid #000; display: flex; flex-direction: column; }
  .stats label { height: 27px; display: flex; align-items: center; gap: 5px; padding-left: 4px; }
  input[type='radio'] { appearance: none; width: 11px; height: 11px; border: 2px solid; border-color: #d4f8f8 #5c8c8c #4c7c7c #d4f8f8; transform: rotate(45deg); margin: 0 2px; flex: none; }
  input[type='radio']:checked { background: #c0004c; border-color: #4c7c7c #fff #fff #4c7c7c; }
  .hlist { flex: 1; display: flex; flex-direction: column; min-height: 0; }
  .hlist .minis { padding: 3px 1px 2px; }
  .hright { display: flex; flex-direction: column; background: #9cdbdb; border: 1px solid #000; min-width: 0; box-shadow: -2px -1px #4c7c7c, 2px 1px #ccf6f6; }
  .chart { flex: 1; display: flex; flex-direction: column; overflow: hidden; }
  .ctitle { margin: 2px 0 0 46px; height: 22px; border: 1px solid #000; background: #b4ffff; box-shadow: 3px 3px #5c8c8c; font-style: italic; line-height: 26px; padding-left: 3px; white-space: nowrap; }
  .bars { flex: 1; display: flex; align-items: flex-end; padding-left: 4px; border-bottom: 4px solid #000; }
  .bin { width: 55px; display: flex; flex-direction: column; align-items: center; line-height: 14px; }
  .hot { color: #d01c1c; }
  .bar { width: 56px; background: #ff1818; border: 1px solid #000; border-bottom: 0; }
  .bar.none { border: 0; }
  .cells { display: flex; padding: 2px 0 7px 4px; }
  .cell { width: 56px; margin-right: -1px; height: 29px; background: #ff1818; border: 1px solid #000; display: flex; flex-direction: column; line-height: 15px; padding: 3px 9px; }
  .cell .to { align-self: flex-end; }
  .hbottom { height: 62px; display: grid; grid-template-columns: 111px 1fr; border: solid #000; border-width: 1px 2px 2px 1px; }
  .hbottom .list { padding-top: 2px; }
  .res { border-left: 1px solid #000; display: flex; flex-direction: column; align-items: stretch; text-align: center; padding: 2px 2px 0; }
  .res output { text-align: left; padding-left: 3px; line-height: 28px; height: 22px; }
  .res input { appearance: none; width: 100%; height: 15px; background: #84b8b8; border: 2px solid; border-color: #4c7c7c #ccf6f6 #ccf6f6 #4c7c7c; }
  .res input::-webkit-slider-thumb { appearance: none; width: 30px; height: 11px; background: linear-gradient(90deg, #9cdbdb 13px, #4c7c7c 13px, #4c7c7c 14px, #ccf6f6 14px, #ccf6f6 15px, #9cdbdb 15px); border: 1px solid; border-color: #ccf6f6 #4c7c7c #4c7c7c #ccf6f6; }
  .sash { height: 5px; border-top: 1px solid #2a7060; box-shadow: inset 0 1px #a4eedb; display: flex; justify-content: flex-end; padding-right: 10px; flex: none; }
  .sash i { width: 9px; height: 8px; margin-top: -3px; background: #54cfae; border: 1px solid; border-color: #a4eedb #2a7060 #2a7060 #a4eedb; }
  .map { margin: 0 4px; height: 184px; border: 2px solid; border-color: #2a7060 #a4eedb #a4eedb #2a7060; outline: 1px solid #000; outline-offset: -3px; flex: none; }
  .map svg { width: 100%; height: 100%; }
  .mrow { margin: 0 4px; height: 51px; display: flex; align-items: flex-start; gap: 4px; overflow: hidden; flex: none; }
  .mrow :global(.icon-btn) { margin-top: -5px; }
  .mrow .count { background: #9cdbdb; border: 1px solid #000; border-top: 0; height: 28px; line-height: 11px; padding-left: 1px; overflow: hidden; }
  .mrow .wide { width: 37px; }
  .mrow .wide svg { width: 30px; }
  .hclose { border-top: 1px solid #000; background: #9cdbdb; padding: 2px; flex: 1; display: grid; --bg: #9cdbdb; --hi: #ccf6f6; --lo: #4c7c7c; }

  .popup { left: 1865px; top: 246px; width: 183px; height: 252px; }
  .mode { height: 18px; background: #9cdbdb; border: 1px solid #000; text-align: center; line-height: 17px; }
  .choice { height: 29px; background: #9cdbdb; border: solid #000; border-width: 0 1px 2px 2px; display: flex; align-items: center; gap: 5px; padding-left: 2px; white-space: nowrap; }
  .pclose { margin-top: auto; height: 29px; border: 1px solid #000; padding: 2px; display: grid; --bg: #9cdbdb; --hi: #ccf6f6; --lo: #4c7c7c; }

  .ime { position: absolute; left: 1759px; top: 1084px; height: 27px; display: flex; align-items: center; gap: 6px; padding-right: 7px; background: linear-gradient(90deg, transparent 14px, #f4f6fc 14px); font: 16px/20px 'Noto Sans CJK SC', sans-serif; color: #446; }
  .ime svg { width: 27px; height: 27px; }
  .ime .sm { width: 16px; height: 16px; }
</style>
